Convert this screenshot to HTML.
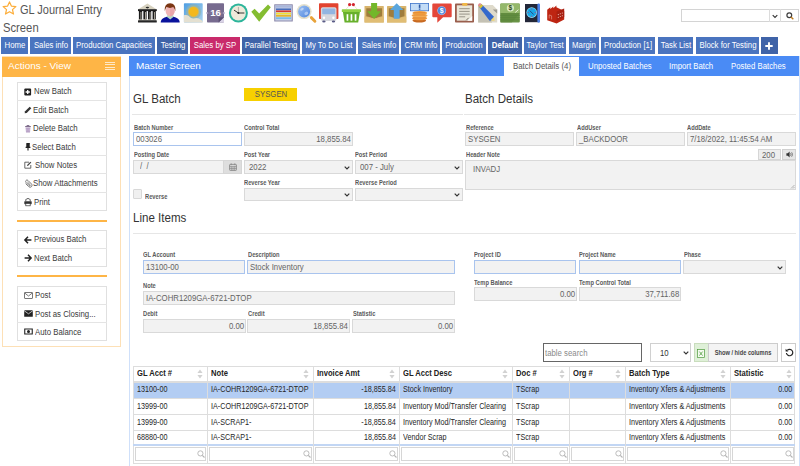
<!DOCTYPE html><html><head><meta charset="utf-8"><style>
html,body{margin:0;padding:0;background:#fff;width:800px;height:466px;overflow:hidden;position:relative}
body{font-family:"Liberation Sans",sans-serif}
.t{position:absolute;white-space:pre}
.b{position:absolute}
svg{position:absolute;overflow:visible}
</style></head><body>
<svg style="left:2px;top:1px" width="15" height="14" viewBox="0 0 24 23"><path d="M12 1.5l3.1 6.9 7.4.7-5.6 5 1.7 7.3L12 17.6l-6.6 3.8 1.7-7.3-5.6-5 7.4-.7z" fill="none" stroke="#fcae3c" stroke-width="2" stroke-linejoin="round"/></svg>
<div class="t" style="left:19.80px;top:4.09px;font-size:12.6px;line-height:12.6px;color:#555;font-weight:400;transform:scaleX(0.8730);transform-origin:0 50%;">GL Journal Entry</div>
<div class="t" style="left:2.50px;top:22.29px;font-size:12.6px;line-height:12.6px;color:#555;font-weight:400;transform:scaleX(0.8929);transform-origin:0 50%;">Screen</div>
<svg style="left:130px;top:0px" width="440" height="26" viewBox="130 0 440 26">
<defs>
<linearGradient id="wg" x1="0" y1="0" x2="1" y2="1"><stop offset="0" stop-color="#4f9ee2"/><stop offset="1" stop-color="#a9d3ee"/></linearGradient>
<linearGradient id="mg" x1="0" y1="0" x2="1" y2="1"><stop offset="0" stop-color="#9cc0f2"/><stop offset="1" stop-color="#4f86de"/></linearGradient>
</defs>
<!-- 1 bank -->
<path d="M147.4 3.6L138.3 9.3h18.2z" fill="#d6d1bf"/>
<ellipse cx="147.4" cy="7.6" rx="1.7" ry="0.8" fill="#2a2a2a"/>
<rect x="138" y="9.2" width="18.8" height="1.9" fill="#1c1c1c"/>
<g fill="#1c1c1c"><rect x="138.9" y="11" width="3.2" height="8.6"/><rect x="143.4" y="11" width="3.2" height="8.6"/><rect x="148" y="11" width="3.2" height="8.6"/><rect x="152.6" y="11" width="3.2" height="8.6"/></g>
<g fill="#d8d3c2"><rect x="140.6" y="12" width="0.7" height="7"/><rect x="145.1" y="12" width="0.7" height="7"/><rect x="149.7" y="12" width="0.7" height="7"/><rect x="154.3" y="12" width="0.7" height="7"/></g>
<rect x="138" y="19.6" width="18.8" height="0.8" fill="#d6d1bf"/>
<rect x="138" y="20.3" width="18.8" height="2.2" rx="0.6" fill="#262626"/>
<!-- 2 person -->
<path d="M160.7 22.6c0-3.6 3.6-6 9.5-6s9.5 2.4 9.5 6z" fill="#0a139c"/>
<path d="M166.4 16.6l3.8 2.8 3.8-2.8-1.2-1.6h-5.2z" fill="#b3dac6"/>
<ellipse cx="170.1" cy="11" rx="4.5" ry="5.4" fill="#f0b6b6"/>
<path d="M170.1 5.6a4.5 5.4 0 0 1 0 10.8z" fill="#e9a7aa"/>
<path d="M164.9 11.2C164.2 6 166.5 3.2 170.1 3.2s6 2.8 5.2 8c-.6-2.3-1.6-3.6-2.2-4.1-1.3 1-4.6 1.1-6.4 0-.6.5-1.3 1.8-1.8 4.1z" fill="#7b3613"/>
<!-- 3 weather -->
<rect x="183.9" y="3.2" width="18.8" height="19.3" rx="0.8" fill="url(#wg)"/>
<circle cx="193.5" cy="11.8" r="7.6" fill="#8fb3b0" opacity="0.75"/>
<circle cx="193.5" cy="11.8" r="5.6" fill="#c8b86a"/>
<circle cx="193.5" cy="11.8" r="4.7" fill="#f3b81d"/>
<path d="M183.9 15.2c1.8-.6 3.6-.3 5 .8 1.2 1.2 2.4 2.6 4.6 2.6 1.6-.6 3.6-1 5.2 0 1.6.8 2.8 1.8 4 2.6v1.3H183.9z" fill="#e4e0d1"/>
<!-- 4 calendar -->
<rect x="207" y="3.3" width="17" height="19.2" rx="0.8" fill="#776b8f"/>
<rect x="207" y="12.7" width="17" height="0.7" fill="#9186a8"/>
<circle cx="207" cy="13" r="0.9" fill="#b7aeca"/><circle cx="224" cy="13" r="0.9" fill="#b7aeca"/>
<text x="215.5" y="16.4" font-family="Liberation Sans" font-weight="700" font-size="9.6" fill="#fff" text-anchor="middle">16</text>
<path d="M218.6 22.5L224 17.3v5.2z" fill="#d9d3e6"/><path d="M218.6 22.5L224 17.3h-5.4z" fill="#5a5072"/>
<!-- 5 clock -->
<circle cx="238.4" cy="13" r="9.5" fill="#2db59b"/>
<circle cx="238.4" cy="13" r="7.5" fill="#efe9da"/>
<path d="M238.4 13V7" stroke="#777" stroke-width="0.5"/>
<path d="M238.4 13l-4.4-2.9M238.4 13h6" stroke="#222" stroke-width="0.9"/>
<circle cx="238.4" cy="13" r="1" fill="#222"/>
<!-- 6 check -->
<path d="M251.3 11.8l3.3-3.1 4.6 4.9 8.8-9.2 2.8 2.9-11.6 14.4z" fill="#84bd31"/>
<!-- 7 spreadsheet -->
<rect x="274.2" y="4.2" width="18.6" height="17.4" rx="0.5" fill="#8e8bac"/>
<rect x="275.3" y="5.3" width="16.4" height="15.2" fill="#cbd5ea"/>
<rect x="275.3" y="5.3" width="16.4" height="2.4" fill="#aab7da"/>
<rect x="276" y="8.5" width="15" height="1.4" fill="#3b63b6"/>
<rect x="276" y="10.4" width="15" height="1.7" fill="#d53a31"/>
<rect x="276" y="12.7" width="15" height="1.8" fill="#f4e02e"/>
<rect x="276" y="15" width="15" height="1.7" fill="#e6b52a"/>
<rect x="276" y="17.3" width="15" height="1.8" fill="#7bbde6"/>
<!-- 8 magnifier -->
<path d="M311.3 17.6l3.6 3.6" stroke="#e8a33a" stroke-width="2.9" stroke-linecap="round"/>
<circle cx="304.1" cy="11.6" r="7.5" fill="#e5e1cc"/>
<circle cx="304.1" cy="11.6" r="6" fill="url(#mg)"/>
<ellipse cx="302" cy="9.2" rx="1.9" ry="1.2" fill="#bcd3f5" transform="rotate(-30 302 9.2)"/>
<ellipse cx="306.3" cy="13.4" rx="2" ry="1.6" fill="#aac6f2" transform="rotate(-30 306.3 13.4)"/>
<!-- 9 truck -->
<rect x="319" y="3.2" width="19.4" height="15.8" rx="0.8" fill="#e2432f"/>
<rect x="320.9" y="7.2" width="15.6" height="13.8" rx="1.8" fill="#d6d7de"/>
<rect x="322.2" y="8.4" width="13" height="5.8" rx="0.8" fill="#93b5e1"/>
<circle cx="324" cy="17.8" r="1.2" fill="#fff"/><circle cx="333.4" cy="17.8" r="1.2" fill="#fff"/>
<ellipse cx="323.9" cy="21.4" rx="1.7" ry="1" fill="#5a5b86"/><ellipse cx="333.5" cy="21.4" rx="1.7" ry="1" fill="#5a5b86"/>
<!-- 10 basket -->
<path d="M345.6 9.6l4.2-4.6M357.6 9.6l-4.2-4.6" stroke="#e6dbbd" stroke-width="0.7"/>
<circle cx="349.6" cy="4.6" r="1.6" fill="#d4242e"/><circle cx="353.4" cy="4.6" r="1.6" fill="#d4242e"/>
<rect x="341.8" y="9.3" width="19.2" height="2.6" rx="0.5" fill="#8fd042"/>
<path d="M342.9 11.9h17l-1.7 10.5h-13.6z" fill="#67b02b"/>
<g fill="#fff"><rect x="346.6" y="14.2" width="1.7" height="6.5"/><rect x="350.6" y="14.2" width="1.7" height="6.5"/><rect x="354.7" y="14.2" width="1.7" height="6.5"/></g>
<!-- 11 download -->
<rect x="364.5" y="6" width="19.3" height="16.5" rx="0.6" fill="#d8b46c"/>
<path d="M366.3 8.2h15.7v8c-2.8.2-4.8 2.1-7.8 2.1s-5-1.9-7.9-2.1z" fill="#9f7d3d"/>
<path d="M364.5 16.4c3.2.2 6.2 2.4 9.6 2.4s6.4-2.2 9.7-2.4v6.1h-19.3z" fill="#e0bd74"/>
<path d="M371.1 3.1h6v8.2h3.9l-6.9 7.6-6.9-7.6h3.9z" fill="#73b72a"/>
<!-- 12 upload -->
<rect x="387" y="6" width="19.3" height="16.5" rx="0.6" fill="#d8b46c"/>
<path d="M388.8 8.2h15.7v8c-2.8.2-4.8 2.1-7.8 2.1s-5-1.9-7.9-2.1z" fill="#9f7d3d"/>
<path d="M387 16.4c3.2.2 6.2 2.4 9.6 2.4s6.4-2.2 9.7-2.4v6.1h-19.3z" fill="#e0bd74"/>
<path d="M396.7 3.3l6.7 6.8h-3.8v8.6h-5.8v-8.6h-3.8z" fill="#5ba6dd"/>
<!-- 13 coins -->
<rect x="410.4" y="3.4" width="18.2" height="7.4" fill="#c3dcf6" stroke="#3d73ca" stroke-width="0.8"/>
<rect x="418.8" y="4.5" width="1.6" height="3.4" fill="#2d5aa8"/><rect x="418.8" y="8.5" width="1.6" height="1.2" fill="#2d5aa8"/>
<ellipse cx="419.3" cy="20.6" rx="6.8" ry="1.9" fill="#c86a22"/>
<ellipse cx="419.6" cy="18.2" rx="7.6" ry="2.1" fill="#ee9a3e"/>
<ellipse cx="419.6" cy="15.6" rx="8" ry="2.2" fill="#f3ac52"/>
<ellipse cx="419.8" cy="13" rx="7.4" ry="2" fill="#f0a040"/>
<path d="M412.5 15.2h13M413 17.8h12.5M413.5 12.7h11.5" stroke="#d9782a" stroke-width="0.5"/>
<!-- 14 speech $ -->
<path d="M433.3 3.6h17.4a1 1 0 0 1 1 1v11.7a1 1 0 0 1-1 1h-7.6l-5.8 5.4v-5.4h-4a1 1 0 0 1-1-1V4.6a1 1 0 0 1 1-1z" fill="#e4473a"/>
<circle cx="441.7" cy="10.6" r="4.4" fill="#a9c5ef"/>
<circle cx="441.7" cy="10.6" r="3.8" fill="#4e86dc"/>
<text x="441.7" y="13.2" font-family="Liberation Sans" font-weight="700" font-size="7" fill="#fff" text-anchor="middle">$</text>
<!-- 15 clipboard -->
<rect x="455" y="3.4" width="19" height="19.1" rx="0.8" fill="#9a5e4d"/>
<rect x="456.8" y="5.3" width="15.4" height="15.4" fill="#e9e6d9"/>
<rect x="462.2" y="2.9" width="5.2" height="2.8" rx="0.6" fill="#f1b847"/>
<path d="M459.2 8.7h10.5M459.2 11.4h10.5M459.2 14.1h10.5M459.2 16.8h6" stroke="#8e8b7f" stroke-width="0.9"/>
<path d="M467.4 20.7l4.8-4.8v4.8z" fill="#fff"/><path d="M466.2 20.3l2.5-2.5" stroke="#77736a" stroke-width="1"/>
<!-- 16 pencil -->
<path d="M478.2 5h14.6l4.4 4.4v13.1h-19z" fill="#dedacb"/>
<path d="M478.2 5l14 17.5h-14z" fill="#c4c1b4"/>
<path d="M492.8 9.4l4.4 0 0 4.2z" fill="#9c9a92"/>
<path d="M478.8 6.6l2.6-2.6 12.6 12.8-1 3.2-3.2 1z" fill="#3468cc"/>
<path d="M478.8 6.6l2.6-2.6 1.8 1.8-2.6 2.6z" fill="#d7c13a"/>
<path d="M478.2 5.9c-.5-1.1.4-2.4 1.6-2.6.8-.1 1.4.2 1.6.7L479 6.6z" fill="#e28a8c"/>
<path d="M494 16.8l.6 4.3-4.2-.6z" fill="#eed57a"/>
<!-- 17 money -->
<rect x="500.3" y="3.5" width="19.5" height="19.1" rx="1" fill="#6a9446"/>
<path d="M500.3 4.5a1 1 0 0 1 1-1h17.5a1 1 0 0 1 1 1v8.6h-19.5z" fill="#94b86b"/>
<path d="M500.3 13.1h19.5l-8 9.5h-11.5z" fill="#5d873a" opacity="0.6"/>
<path d="M500.3 15.4h19.5M500.3 17.6h19.5M500.3 19.8h19.5" stroke="#55803a" stroke-width="0.5"/>
<circle cx="510.4" cy="8" r="3.6" fill="#dbeac0"/>
<text x="510.4" y="10.4" font-family="Liberation Sans" font-weight="700" font-size="6.6" fill="#2f4b20" text-anchor="middle">$</text>
<path d="M515.2 12.5l3.2-2.8" stroke="#e4eed2" stroke-width="1"/>
<!-- 18 device -->
<rect x="525" y="4" width="13.2" height="18.2" fill="#232738"/>
<rect x="537.4" y="3.4" width="2.6" height="19.4" rx="1.2" fill="#4d82e8"/>
<circle cx="531.7" cy="12.6" r="5.3" fill="#8fdcf8"/>
<circle cx="531.7" cy="12.6" r="4.6" fill="#1aa6e6"/>
<g fill="#d43a5a"><circle cx="531.7" cy="9" r="0.5"/><circle cx="528.2" cy="12.6" r="0.5"/><circle cx="535.2" cy="12.6" r="0.5"/><circle cx="531.7" cy="16.2" r="0.5"/></g>
<path d="M529.8 10.7l3.8 3.8" stroke="#24366e" stroke-width="0.8"/>
<!-- 19 factory -->
<path d="M547.2 9.8l3.1-2.6v1.9l3-2.7v1.9l3.1-2.8v1.8l7.8 3.6v8.6l-7.6 4.1-9.4-3.4z" fill="#be2512"/>
<path d="M556.6 11.6l7.6-3.2v8.6l-7.6 4.1z" fill="#a81f10"/>
<g fill="#f3d0ca"><circle cx="558.3" cy="14.6" r="0.55"/><circle cx="560.3" cy="13.8" r="0.55"/><circle cx="562.3" cy="13" r="0.55"/><circle cx="558.3" cy="17.3" r="0.55"/><circle cx="560.3" cy="16.5" r="0.55"/><circle cx="562.3" cy="15.7" r="0.55"/></g>
<path d="M549.2 18.5v-3.6l2.4.9v3.6" fill="none" stroke="#f0c0b8" stroke-width="0.5"/>
</svg>
<div class="b" style="left:680.50px;top:9.00px;width:118.00px;height:13.00px;background:#fff;border:1px solid #d4d4d4;box-sizing:border-box;"></div>
<div class="b" style="left:769.00px;top:9.00px;width:1.00px;height:13.00px;background:#dcdcdc;"></div>
<div class="b" style="left:780.00px;top:9.00px;width:1.00px;height:13.00px;background:#dcdcdc;"></div>
<svg style="left:771.5px;top:13.5px" width="6" height="5" viewBox="0 0 6 5"><path d="M0.7 1.2L3 3.5 5.3 1.2" fill="none" stroke="#333" stroke-width="1.1"/></svg>
<svg style="left:785.5px;top:11.5px" width="8" height="8" viewBox="0 0 8 8"><circle cx="3.3" cy="3.3" r="2.4" fill="none" stroke="#3d3d3d" stroke-width="1.2"/><path d="M5 5l2.3 2.3" stroke="#c07a1a" stroke-width="1.4"/></svg>
<div class="b" style="left:1.20px;top:37.00px;width:27.00px;height:17.00px;background:#4a74bf;"></div>
<div class="t" style="left:-185.30px;width:400px;text-align:center;top:40.84px;font-size:8.3px;line-height:8.3px;color:#fff;font-weight:400;transform:scaleX(0.9398);transform-origin:50% 50%;">Home</div>
<div class="b" style="left:30.00px;top:37.00px;width:41.00px;height:17.00px;background:#4a74bf;"></div>
<div class="t" style="left:-149.50px;width:400px;text-align:center;top:40.84px;font-size:8.3px;line-height:8.3px;color:#fff;font-weight:400;transform:scaleX(0.9398);transform-origin:50% 50%;">Sales info</div>
<div class="b" style="left:73.00px;top:37.00px;width:82.00px;height:17.00px;background:#4a74bf;"></div>
<div class="t" style="left:-86.00px;width:400px;text-align:center;top:40.84px;font-size:8.3px;line-height:8.3px;color:#fff;font-weight:400;transform:scaleX(0.9398);transform-origin:50% 50%;">Production Capacities</div>
<div class="b" style="left:157.00px;top:37.00px;width:31.00px;height:17.00px;background:#3f63a8;"></div>
<div class="t" style="left:-27.50px;width:400px;text-align:center;top:40.84px;font-size:8.3px;line-height:8.3px;color:#fff;font-weight:400;transform:scaleX(0.9398);transform-origin:50% 50%;">Testing</div>
<div class="b" style="left:190.00px;top:37.00px;width:49.50px;height:17.00px;background:#c92a6b;"></div>
<div class="t" style="left:14.75px;width:400px;text-align:center;top:40.84px;font-size:8.3px;line-height:8.3px;color:#fff;font-weight:400;transform:scaleX(0.9398);transform-origin:50% 50%;">Sales by SP</div>
<div class="b" style="left:241.50px;top:37.00px;width:58.50px;height:17.00px;background:#3f63a8;"></div>
<div class="t" style="left:70.75px;width:400px;text-align:center;top:40.84px;font-size:8.3px;line-height:8.3px;color:#fff;font-weight:400;transform:scaleX(0.9398);transform-origin:50% 50%;">Parallel Testing</div>
<div class="b" style="left:302.00px;top:37.00px;width:54.00px;height:17.00px;background:#4a74bf;"></div>
<div class="t" style="left:129.00px;width:400px;text-align:center;top:40.84px;font-size:8.3px;line-height:8.3px;color:#fff;font-weight:400;transform:scaleX(0.9398);transform-origin:50% 50%;">My To Do List</div>
<div class="b" style="left:358.00px;top:37.00px;width:41.00px;height:17.00px;background:#4a74bf;"></div>
<div class="t" style="left:178.50px;width:400px;text-align:center;top:40.84px;font-size:8.3px;line-height:8.3px;color:#fff;font-weight:400;transform:scaleX(0.9398);transform-origin:50% 50%;">Sales Info</div>
<div class="b" style="left:401.00px;top:37.00px;width:39.00px;height:17.00px;background:#4a74bf;"></div>
<div class="t" style="left:220.50px;width:400px;text-align:center;top:40.84px;font-size:8.3px;line-height:8.3px;color:#fff;font-weight:400;transform:scaleX(0.9398);transform-origin:50% 50%;">CRM Info</div>
<div class="b" style="left:442.00px;top:37.00px;width:44.00px;height:17.00px;background:#4a74bf;"></div>
<div class="t" style="left:264.00px;width:400px;text-align:center;top:40.84px;font-size:8.3px;line-height:8.3px;color:#fff;font-weight:400;transform:scaleX(0.9398);transform-origin:50% 50%;">Production</div>
<div class="b" style="left:488.00px;top:37.00px;width:33.50px;height:17.00px;background:#3f63a8;"></div>
<div class="t" style="left:304.75px;width:400px;text-align:center;top:40.84px;font-size:8.3px;line-height:8.3px;color:#fff;font-weight:700;transform:scaleX(0.9398);transform-origin:50% 50%;">Default</div>
<div class="b" style="left:523.50px;top:37.00px;width:42.50px;height:17.00px;background:#4a74bf;"></div>
<div class="t" style="left:344.75px;width:400px;text-align:center;top:40.84px;font-size:8.3px;line-height:8.3px;color:#fff;font-weight:400;transform:scaleX(0.9398);transform-origin:50% 50%;">Taylor Test</div>
<div class="b" style="left:568.60px;top:37.00px;width:30.40px;height:17.00px;background:#4a74bf;"></div>
<div class="t" style="left:383.80px;width:400px;text-align:center;top:40.84px;font-size:8.3px;line-height:8.3px;color:#fff;font-weight:400;transform:scaleX(0.9398);transform-origin:50% 50%;">Margin</div>
<div class="b" style="left:601.00px;top:37.00px;width:54.00px;height:17.00px;background:#4a74bf;"></div>
<div class="t" style="left:428.00px;width:400px;text-align:center;top:40.84px;font-size:8.3px;line-height:8.3px;color:#fff;font-weight:400;transform:scaleX(0.9398);transform-origin:50% 50%;">Production [1]</div>
<div class="b" style="left:657.60px;top:37.00px;width:35.80px;height:17.00px;background:#4a74bf;"></div>
<div class="t" style="left:475.50px;width:400px;text-align:center;top:40.84px;font-size:8.3px;line-height:8.3px;color:#fff;font-weight:400;transform:scaleX(0.9398);transform-origin:50% 50%;">Task List</div>
<div class="b" style="left:696.00px;top:37.00px;width:63.00px;height:17.00px;background:#4a74bf;"></div>
<div class="t" style="left:527.50px;width:400px;text-align:center;top:40.84px;font-size:8.3px;line-height:8.3px;color:#fff;font-weight:400;transform:scaleX(0.9398);transform-origin:50% 50%;">Block for Testing</div>
<div class="b" style="left:761.00px;top:37.00px;width:16.50px;height:17.00px;background:#3f63a8;"></div>
<svg style="left:765.2px;top:41.8px" width="8" height="8" viewBox="0 0 8 8"><path d="M4 0.3v7.4M0.3 4h7.4" stroke="#fff" stroke-width="1.9"/></svg>
<div class="b" style="left:2.30px;top:56.20px;width:118.70px;height:290.80px;background:#fff;border:1px solid #fde0b6;box-sizing:border-box;"></div>
<div class="b" style="left:2.30px;top:57.00px;width:118.70px;height:19.60px;background:#feb546;"></div>
<div class="t" style="left:8.30px;top:60.71px;font-size:9.4px;line-height:9.4px;color:#fff;font-weight:400;transform:scaleX(1.0638);transform-origin:0 50%;">Actions - View</div>
<div class="b" style="left:105.00px;top:62.00px;width:10.00px;height:0.90px;background:#ffe9c8;"></div>
<div class="b" style="left:105.00px;top:64.40px;width:10.00px;height:0.90px;background:#ffe9c8;"></div>
<div class="b" style="left:105.00px;top:67.00px;width:10.00px;height:0.90px;background:#ffe9c8;"></div>
<div class="b" style="left:105.00px;top:69.10px;width:10.00px;height:0.90px;background:#ffe9c8;"></div>
<div class="b" style="left:17.00px;top:82.00px;width:90.00px;height:128.70px;background:#fff;border:1px solid #e0e0e0;box-sizing:border-box;"></div>
<div class="t" style="left:33.90px;top:87.44px;font-size:8.3px;line-height:8.3px;color:#3a3a3a;font-weight:400;transform:scaleX(0.9398);transform-origin:0 50%;">New Batch</div>
<svg style="left:23.60px;top:87.80px" width="8" height="8" viewBox="0 0 8 8"><rect x="0.3" y="0.6" width="6.8" height="6.8" rx="1" fill="#222"/><path d="M3.7 1.9v4.2M1.6 4h4.2" stroke="#fff" stroke-width="1.3"/></svg>
<div class="b" style="left:17.00px;top:100.00px;width:90.00px;height:1.00px;background:#e4e4e4;"></div>
<div class="t" style="left:33.40px;top:105.80px;font-size:8.3px;line-height:8.3px;color:#3a3a3a;font-weight:400;transform:scaleX(0.9398);transform-origin:0 50%;">Edit Batch</div>
<svg style="left:23.60px;top:106.15px" width="8" height="8" viewBox="0 0 8 8"><path d="M0.6 7.3l0.5-2 4.6-4.6 1.6 1.6-4.6 4.6z" fill="#333"/></svg>
<div class="b" style="left:17.00px;top:118.00px;width:90.00px;height:1.00px;background:#e4e4e4;"></div>
<div class="t" style="left:32.70px;top:124.15px;font-size:8.3px;line-height:8.3px;color:#3a3a3a;font-weight:400;transform:scaleX(0.9398);transform-origin:0 50%;">Delete Batch</div>
<svg style="left:23.60px;top:124.50px" width="8" height="8" viewBox="0 0 8 8"><path d="M1.1 1.6h5.8M2.9 1.6V0.6h2.2v1" fill="none" stroke="#6e5a7c" stroke-width="0.9"/><path d="M1.6 2.4l0.4 5.2h4l0.4-5.2z" fill="#b39bc3"/><path d="M2.9 3.4v3.2M5.1 3.4v3.2" stroke="#e9e0ef" stroke-width="0.5"/></svg>
<div class="b" style="left:17.00px;top:137.00px;width:90.00px;height:1.00px;background:#e4e4e4;"></div>
<div class="t" style="left:31.70px;top:142.55px;font-size:8.3px;line-height:8.3px;color:#3a3a3a;font-weight:400;transform:scaleX(0.9398);transform-origin:0 50%;">Select Batch</div>
<svg style="left:23.60px;top:142.90px" width="8" height="8" viewBox="0 0 8 8"><path d="M2.4 0.6h3.4M3 0.9v3M5 0.9v3M1.6 4.4h4.8M4 4.4v3.2" stroke="#222" stroke-width="1.1"/><rect x="2.6" y="0.6" width="2.8" height="3.6" fill="#222"/></svg>
<div class="b" style="left:17.00px;top:155.00px;width:90.00px;height:1.00px;background:#e4e4e4;"></div>
<div class="t" style="left:34.60px;top:160.94px;font-size:8.3px;line-height:8.3px;color:#3a3a3a;font-weight:400;transform:scaleX(0.9398);transform-origin:0 50%;">Show Notes</div>
<svg style="left:23.60px;top:161.30px" width="8" height="8" viewBox="0 0 8 8"><path d="M5 1.2H0.8v6h6V4" fill="none" stroke="#444" stroke-width="0.8"/><path d="M3 5l0.3-1.2L6.4 0.7l0.9 0.9-3.1 3.1z" fill="#444"/></svg>
<div class="b" style="left:17.00px;top:173.00px;width:90.00px;height:1.00px;background:#e4e4e4;"></div>
<div class="t" style="left:32.70px;top:179.35px;font-size:8.3px;line-height:8.3px;color:#3a3a3a;font-weight:400;transform:scaleX(0.9398);transform-origin:0 50%;">Show Attachments</div>
<svg style="left:23.60px;top:179.70px" width="8" height="8" viewBox="0 0 8 8"><g transform="translate(8 0) scale(-1 1)"><path d="M6.3 3.6L3.4 6.5c-.9.9-2.2.9-2.9.1s-.7-1.9.1-2.7L4 0.5c.6-.6 1.5-.6 2 0s.5 1.3 0 1.9L2.8 5.6c-.3.3-.7.3-.9 0s-.3-.6 0-.9L4.6 2" fill="none" stroke="#666" stroke-width="0.9"/></g></svg>
<div class="b" style="left:17.00px;top:192.00px;width:90.00px;height:1.00px;background:#e4e4e4;"></div>
<div class="t" style="left:34.10px;top:197.75px;font-size:8.3px;line-height:8.3px;color:#3a3a3a;font-weight:400;transform:scaleX(0.9398);transform-origin:0 50%;">Print</div>
<svg style="left:23.60px;top:198.10px" width="8" height="8" viewBox="0 0 8 8"><path d="M1.8 3.2V2.2c0-1 1-1.6 2.2-1.6s2.2.6 2.2 1.6v1" fill="none" stroke="#333" stroke-width="0.9"/><rect x="0.3" y="3.2" width="7.4" height="3" rx="0.6" fill="#333"/><rect x="1.8" y="5.4" width="4.4" height="2.4" fill="#fff" stroke="#333" stroke-width="0.7"/></svg>
<div class="b" style="left:17.00px;top:219.50px;width:90.00px;height:2.00px;background:#feb546;"></div>
<div class="b" style="left:17.00px;top:229.60px;width:90.00px;height:37.10px;background:#fff;border:1px solid #e0e0e0;box-sizing:border-box;"></div>
<div class="t" style="left:33.80px;top:235.19px;font-size:8.3px;line-height:8.3px;color:#3a3a3a;font-weight:400;transform:scaleX(0.9398);transform-origin:0 50%;">Previous Batch</div>
<svg style="left:23.60px;top:235.55px" width="8" height="8" viewBox="0 0 8 8"><path d="M4 0.8L0.9 4 4 7.2M1.2 4h6.2" fill="none" stroke="#222" stroke-width="1.5"/></svg>
<div class="b" style="left:17.00px;top:248.00px;width:90.00px;height:1.00px;background:#e4e4e4;"></div>
<div class="t" style="left:33.80px;top:253.75px;font-size:8.3px;line-height:8.3px;color:#3a3a3a;font-weight:400;transform:scaleX(0.9398);transform-origin:0 50%;">Next Batch</div>
<svg style="left:23.60px;top:254.10px" width="8" height="8" viewBox="0 0 8 8"><path d="M4 0.8L7.1 4 4 7.2M6.8 4H0.6" fill="none" stroke="#222" stroke-width="1.5"/></svg>
<div class="b" style="left:17.00px;top:275.20px;width:90.00px;height:2.00px;background:#feb546;"></div>
<div class="b" style="left:17.00px;top:285.50px;width:90.00px;height:55.00px;background:#fff;border:1px solid #e0e0e0;box-sizing:border-box;"></div>
<div class="t" style="left:34.90px;top:291.19px;font-size:8.3px;line-height:8.3px;color:#3a3a3a;font-weight:400;transform:scaleX(0.9398);transform-origin:0 50%;">Post</div>
<svg style="left:23.60px;top:292.05px" width="9" height="7" viewBox="0 0 9 7"><rect x="0.5" y="0.5" width="8" height="6" rx="0.5" fill="none" stroke="#555" stroke-width="0.8"/><path d="M0.7 1L4.5 4 8.3 1" fill="none" stroke="#555" stroke-width="0.8"/></svg>
<div class="b" style="left:17.00px;top:304.00px;width:90.00px;height:1.00px;background:#e4e4e4;"></div>
<div class="t" style="left:34.50px;top:309.54px;font-size:8.3px;line-height:8.3px;color:#3a3a3a;font-weight:400;transform:scaleX(0.9398);transform-origin:0 50%;">Post as Closing...</div>
<svg style="left:23.60px;top:310.40px" width="9" height="7" viewBox="0 0 9 7"><rect x="0.2" y="0.3" width="8.6" height="6.4" rx="0.5" fill="#222"/><path d="M0.3 0.8L4.5 3.8 8.7 0.8" fill="none" stroke="#fff" stroke-width="0.7"/></svg>
<div class="b" style="left:17.00px;top:322.00px;width:90.00px;height:1.00px;background:#e4e4e4;"></div>
<div class="t" style="left:35.20px;top:327.60px;font-size:8.3px;line-height:8.3px;color:#3a3a3a;font-weight:400;transform:scaleX(0.9398);transform-origin:0 50%;">Auto Balance</div>
<svg style="left:23.60px;top:328.45px" width="9" height="7" viewBox="0 0 9 7"><rect x="0.2" y="0.5" width="8.6" height="6" fill="#222"/><rect x="1.3" y="1.5" width="6.4" height="4" fill="#fff"/><circle cx="4.5" cy="3.5" r="1.5" fill="#222"/></svg>
<div class="b" style="left:129.00px;top:56.20px;width:671.00px;height:413.80px;background:#fff;border:1px solid #cfe0fa;box-sizing:border-box;"></div>
<div class="b" style="left:129.00px;top:56.20px;width:670.00px;height:20.20px;background:#4a8bf5;"></div>
<div class="t" style="left:135.80px;top:61.41px;font-size:9.4px;line-height:9.4px;color:#fff;font-weight:400;transform:scaleX(1.0638);transform-origin:0 50%;">Master Screen</div>
<div class="b" style="left:504.40px;top:56.80px;width:74.30px;height:19.40px;background:#fff;"></div>
<div class="t" style="left:512.70px;top:62.15px;font-size:8.3px;line-height:8.3px;color:#555;font-weight:400;transform:scaleX(0.9458);transform-origin:0 50%;">Batch Details (4)</div>
<div class="t" style="left:587.70px;top:62.15px;font-size:8.3px;line-height:8.3px;color:#fff;font-weight:400;transform:scaleX(0.9398);transform-origin:0 50%;">Unposted Batches</div>
<div class="t" style="left:668.60px;top:62.15px;font-size:8.3px;line-height:8.3px;color:#fff;font-weight:400;transform:scaleX(0.9398);transform-origin:0 50%;">Import Batch</div>
<div class="t" style="left:730.70px;top:62.15px;font-size:8.3px;line-height:8.3px;color:#fff;font-weight:400;transform:scaleX(0.9398);transform-origin:0 50%;">Posted Batches</div>
<div class="t" style="left:132.70px;top:92.84px;font-size:12.3px;line-height:12.3px;color:#333;font-weight:400;transform:scaleX(0.9390);transform-origin:0 50%;">GL Batch</div>
<div class="b" style="left:244.30px;top:87.90px;width:52.50px;height:12.80px;background:#f7d000;"></div>
<div class="t" style="left:70.60px;width:400px;text-align:center;top:90.24px;font-size:8.3px;line-height:8.3px;color:#555;font-weight:400;transform:scaleX(0.9337);transform-origin:50% 50%;">SYSGEN</div>
<div class="t" style="left:465.10px;top:92.75px;font-size:12.3px;line-height:12.3px;color:#333;font-weight:400;transform:scaleX(0.9390);transform-origin:0 50%;">Batch Details</div>
<div class="b" style="left:132.00px;top:114.00px;width:331.00px;height:1.00px;background:#e6e6e6;"></div>
<div class="b" style="left:464.00px;top:114.00px;width:332.00px;height:1.00px;background:#e6e6e6;"></div>
<div class="t" style="left:133.70px;top:124.96px;font-size:6.4px;line-height:6.4px;color:#5a5a5a;font-weight:700;transform:scaleX(0.8984);transform-origin:0 50%;">Batch Number</div>
<div class="t" style="left:244.30px;top:124.96px;font-size:6.4px;line-height:6.4px;color:#5a5a5a;font-weight:700;transform:scaleX(0.8984);transform-origin:0 50%;">Control Total</div>
<div class="t" style="left:465.60px;top:124.96px;font-size:6.4px;line-height:6.4px;color:#5a5a5a;font-weight:700;transform:scaleX(0.8984);transform-origin:0 50%;">Reference</div>
<div class="t" style="left:576.50px;top:124.96px;font-size:6.4px;line-height:6.4px;color:#5a5a5a;font-weight:700;transform:scaleX(0.8984);transform-origin:0 50%;">AddUser</div>
<div class="t" style="left:687.00px;top:124.96px;font-size:6.4px;line-height:6.4px;color:#5a5a5a;font-weight:700;transform:scaleX(0.8984);transform-origin:0 50%;">AddDate</div>
<div class="b" style="left:133.00px;top:132.00px;width:109.00px;height:14.00px;background:#fff;border:1px solid #a9c4ee;box-sizing:border-box;"></div>
<div class="t" style="left:135.50px;top:134.54px;font-size:8.3px;line-height:8.3px;color:#646464;font-weight:400;transform:scaleX(0.9398);transform-origin:0 50%;">003026</div>
<div class="b" style="left:244.00px;top:132.00px;width:109.00px;height:14.00px;background:#f2f2f2;border:1px solid #d9d9d9;box-sizing:border-box;"></div>
<div class="t" style="right:449.00px;top:134.54px;font-size:8.3px;line-height:8.3px;color:#646464;font-weight:400;text-align:right;transform:scaleX(0.9398);transform-origin:100% 50%;">18,855.84</div>
<div class="b" style="left:465.00px;top:132.00px;width:109.00px;height:14.00px;background:#f2f2f2;border:1px solid #d9d9d9;box-sizing:border-box;"></div>
<div class="t" style="left:467.50px;top:134.54px;font-size:8.3px;line-height:8.3px;color:#646464;font-weight:400;transform:scaleX(0.9398);transform-origin:0 50%;">SYSGEN</div>
<div class="b" style="left:576.00px;top:132.00px;width:109.00px;height:14.00px;background:#f2f2f2;border:1px solid #d9d9d9;box-sizing:border-box;"></div>
<div class="t" style="left:578.50px;top:134.54px;font-size:8.3px;line-height:8.3px;color:#646464;font-weight:400;transform:scaleX(0.9398);transform-origin:0 50%;">_BACKDOOR</div>
<div class="b" style="left:687.00px;top:132.00px;width:109.00px;height:14.00px;background:#f2f2f2;border:1px solid #d9d9d9;box-sizing:border-box;"></div>
<div class="t" style="left:689.50px;top:134.54px;font-size:8.3px;line-height:8.3px;color:#646464;font-weight:400;transform:scaleX(0.9398);transform-origin:0 50%;">7/18/2022, 11:45:54 AM</div>
<div class="t" style="left:133.70px;top:152.06px;font-size:6.4px;line-height:6.4px;color:#5a5a5a;font-weight:700;transform:scaleX(0.8984);transform-origin:0 50%;">Posting Date</div>
<div class="t" style="left:244.30px;top:152.06px;font-size:6.4px;line-height:6.4px;color:#5a5a5a;font-weight:700;transform:scaleX(0.8984);transform-origin:0 50%;">Post Year</div>
<div class="t" style="left:355.00px;top:152.06px;font-size:6.4px;line-height:6.4px;color:#5a5a5a;font-weight:700;transform:scaleX(0.8984);transform-origin:0 50%;">Post Period</div>
<div class="t" style="left:465.60px;top:152.06px;font-size:6.4px;line-height:6.4px;color:#5a5a5a;font-weight:700;transform:scaleX(0.8984);transform-origin:0 50%;">Header Note</div>
<div class="b" style="left:133.00px;top:160.00px;width:109.00px;height:14.00px;background:#f2f2f2;border:1px solid #d9d9d9;box-sizing:border-box;"></div>
<div class="t" style="left:140.00px;top:162.25px;font-size:8.3px;line-height:8.3px;color:#646464;font-weight:400;transform:scaleX(0.9398);transform-origin:0 50%;">/  /</div>
<div class="b" style="left:223.00px;top:160.00px;width:19.00px;height:14.00px;background:#dedede;border:1px solid #d6d6d6;box-sizing:border-box;"></div>
<svg style="left:228.5px;top:162.5px" width="8" height="8" viewBox="0 0 8 8"><rect x="0.6" y="1.4" width="6.8" height="6" rx="0.6" fill="none" stroke="#808080" stroke-width="0.8"/><path d="M0.6 3.4h6.8M2.3 3.4v4M4 3.4v4M5.7 3.4v4M0.6 5.4h6.8M2.2 0.2v2M5.8 0.2v2" stroke="#808080" stroke-width="0.6"/></svg>
<div class="b" style="left:244.00px;top:160.00px;width:109.00px;height:14.00px;background:#f2f2f2;border:1px solid #d9d9d9;box-sizing:border-box;"></div>
<div class="t" style="left:248.90px;top:162.54px;font-size:8.3px;line-height:8.3px;color:#646464;font-weight:400;transform:scaleX(0.9398);transform-origin:0 50%;">2022</div>
<svg style="left:343.50px;top:165.50px" width="6" height="4" viewBox="0 0 6 4"><path d="M0.7 0.7L3 3 5.3 0.7" fill="none" stroke="#333" stroke-width="1.2"/></svg>
<div class="b" style="left:355.00px;top:160.00px;width:108.00px;height:14.00px;background:#f2f2f2;border:1px solid #d9d9d9;box-sizing:border-box;"></div>
<div class="t" style="left:359.90px;top:162.54px;font-size:8.3px;line-height:8.3px;color:#646464;font-weight:400;transform:scaleX(0.9398);transform-origin:0 50%;">007 - July</div>
<svg style="left:453.50px;top:165.50px" width="6" height="4" viewBox="0 0 6 4"><path d="M0.7 0.7L3 3 5.3 0.7" fill="none" stroke="#333" stroke-width="1.2"/></svg>
<div class="b" style="left:758.00px;top:149.00px;width:23.00px;height:11.00px;background:#eeeeee;border:1px solid #d6d6d6;box-sizing:border-box;"></div>
<div class="t" style="left:761.60px;top:150.54px;font-size:8.3px;line-height:8.3px;color:#646464;font-weight:400;transform:scaleX(0.9398);transform-origin:0 50%;">200</div>
<div class="b" style="left:782.00px;top:149.00px;width:14.00px;height:11.00px;background:#e6e6e6;border:1px solid #d0d0d0;box-sizing:border-box;"></div>
<svg style="left:785.5px;top:151px" width="7" height="7" viewBox="0 0 7 7"><path d="M0.4 2.3h1.4L3.6 0.6v5.8L1.8 4.7H0.4z" fill="#333"/><path d="M4.6 2.2c.5.6.5 2 0 2.6M5.6 1.3c1 1 1 3.4 0 4.4" fill="none" stroke="#333" stroke-width="0.6"/></svg>
<div class="b" style="left:465.00px;top:160.00px;width:331.00px;height:30.00px;background:#f2f2f2;border:1px solid #d9d9d9;box-sizing:border-box;"></div>
<div class="t" style="left:472.50px;top:165.04px;font-size:8.3px;line-height:8.3px;color:#666;font-weight:400;transform:scaleX(0.9398);transform-origin:0 50%;">INVADJ</div>
<svg style="left:790px;top:184px" width="5" height="5" viewBox="0 0 5 5"><path d="M4.5 1L1 4.5M4.5 3L3 4.5" stroke="#888" stroke-width="0.6"/></svg>
<div class="t" style="left:244.30px;top:179.76px;font-size:6.4px;line-height:6.4px;color:#5a5a5a;font-weight:700;transform:scaleX(0.8984);transform-origin:0 50%;">Reverse Year</div>
<div class="t" style="left:355.00px;top:179.76px;font-size:6.4px;line-height:6.4px;color:#5a5a5a;font-weight:700;transform:scaleX(0.8984);transform-origin:0 50%;">Reverse Period</div>
<div class="b" style="left:244.00px;top:188.00px;width:109.00px;height:13.00px;background:#f2f2f2;border:1px solid #d9d9d9;box-sizing:border-box;"></div>
<svg style="left:343.50px;top:193.00px" width="6" height="4" viewBox="0 0 6 4"><path d="M0.7 0.7L3 3 5.3 0.7" fill="none" stroke="#333" stroke-width="1.2"/></svg>
<div class="b" style="left:355.00px;top:188.00px;width:108.00px;height:13.00px;background:#f2f2f2;border:1px solid #d9d9d9;box-sizing:border-box;"></div>
<svg style="left:453.50px;top:193.00px" width="6" height="4" viewBox="0 0 6 4"><path d="M0.7 0.7L3 3 5.3 0.7" fill="none" stroke="#333" stroke-width="1.2"/></svg>
<div class="b" style="left:133.30px;top:189.20px;width:9.10px;height:9.80px;background:#f0f0f0;border:1px solid #d8d8d8;box-sizing:border-box;border-radius:1px;"></div>
<div class="t" style="left:144.80px;top:193.76px;font-size:6.4px;line-height:6.4px;color:#5a5a5a;font-weight:700;transform:scaleX(0.8984);transform-origin:0 50%;">Reverse</div>
<div class="t" style="left:133.00px;top:212.04px;font-size:12.3px;line-height:12.3px;color:#333;font-weight:400;transform:scaleX(0.9390);transform-origin:0 50%;">Line Items</div>
<div class="b" style="left:133.00px;top:233.30px;width:663.00px;height:1.00px;background:#e6e6e6;"></div>
<div class="t" style="left:143.30px;top:252.06px;font-size:6.4px;line-height:6.4px;color:#5a5a5a;font-weight:700;transform:scaleX(0.8984);transform-origin:0 50%;">GL Account</div>
<div class="t" style="left:247.70px;top:252.06px;font-size:6.4px;line-height:6.4px;color:#5a5a5a;font-weight:700;transform:scaleX(0.8984);transform-origin:0 50%;">Description</div>
<div class="t" style="left:473.90px;top:252.06px;font-size:6.4px;line-height:6.4px;color:#5a5a5a;font-weight:700;transform:scaleX(0.8984);transform-origin:0 50%;">Project ID</div>
<div class="t" style="left:579.20px;top:252.06px;font-size:6.4px;line-height:6.4px;color:#5a5a5a;font-weight:700;transform:scaleX(0.8984);transform-origin:0 50%;">Project Name</div>
<div class="t" style="left:683.60px;top:252.06px;font-size:6.4px;line-height:6.4px;color:#5a5a5a;font-weight:700;transform:scaleX(0.8984);transform-origin:0 50%;">Phase</div>
<div class="b" style="left:143.00px;top:260.00px;width:102.00px;height:14.00px;background:#f2f2f2;border:1px solid #a9c4ee;box-sizing:border-box;"></div>
<div class="t" style="left:145.50px;top:262.55px;font-size:8.3px;line-height:8.3px;color:#646464;font-weight:400;transform:scaleX(0.9398);transform-origin:0 50%;">13100-00</div>
<div class="b" style="left:247.00px;top:260.00px;width:208.00px;height:14.00px;background:#f2f2f2;border:1px solid #a9c4ee;box-sizing:border-box;"></div>
<div class="t" style="left:249.50px;top:262.55px;font-size:8.3px;line-height:8.3px;color:#646464;font-weight:400;transform:scaleX(0.9398);transform-origin:0 50%;">Stock Inventory</div>
<div class="b" style="left:474.00px;top:260.00px;width:102.00px;height:14.00px;background:#f2f2f2;border:1px solid #a9c4ee;box-sizing:border-box;"></div>
<div class="b" style="left:579.00px;top:260.00px;width:102.00px;height:14.00px;background:#f2f2f2;border:1px solid #a9c4ee;box-sizing:border-box;"></div>
<div class="b" style="left:683.00px;top:260.00px;width:103.00px;height:14.00px;background:#f2f2f2;border:1px solid #d9d9d9;box-sizing:border-box;"></div>
<svg style="left:776.50px;top:265.50px" width="6" height="4" viewBox="0 0 6 4"><path d="M0.7 0.7L3 3 5.3 0.7" fill="none" stroke="#333" stroke-width="1.2"/></svg>
<div class="t" style="left:143.30px;top:283.36px;font-size:6.4px;line-height:6.4px;color:#5a5a5a;font-weight:700;transform:scaleX(0.8984);transform-origin:0 50%;">Note</div>
<div class="t" style="left:473.90px;top:280.36px;font-size:6.4px;line-height:6.4px;color:#5a5a5a;font-weight:700;transform:scaleX(0.8984);transform-origin:0 50%;">Temp Balance</div>
<div class="t" style="left:579.20px;top:280.36px;font-size:6.4px;line-height:6.4px;color:#5a5a5a;font-weight:700;transform:scaleX(0.8984);transform-origin:0 50%;">Temp Control Total</div>
<div class="b" style="left:143.00px;top:291.00px;width:312.00px;height:14.00px;background:#f2f2f2;border:1px solid #d9d9d9;box-sizing:border-box;"></div>
<div class="t" style="left:145.50px;top:293.55px;font-size:8.3px;line-height:8.3px;color:#646464;font-weight:400;transform:scaleX(0.9398);transform-origin:0 50%;">IA-COHR1209GA-6721-DTOP</div>
<div class="b" style="left:474.00px;top:287.00px;width:103.00px;height:14.00px;background:#f2f2f2;border:1px solid #d9d9d9;box-sizing:border-box;"></div>
<div class="t" style="right:225.00px;top:289.55px;font-size:8.3px;line-height:8.3px;color:#646464;font-weight:400;text-align:right;transform:scaleX(0.9398);transform-origin:100% 50%;">0.00</div>
<div class="b" style="left:579.00px;top:287.00px;width:102.00px;height:14.00px;background:#f2f2f2;border:1px solid #d9d9d9;box-sizing:border-box;"></div>
<div class="t" style="right:121.00px;top:289.55px;font-size:8.3px;line-height:8.3px;color:#646464;font-weight:400;text-align:right;transform:scaleX(0.9398);transform-origin:100% 50%;">37,711.68</div>
<div class="t" style="left:143.30px;top:310.96px;font-size:6.4px;line-height:6.4px;color:#5a5a5a;font-weight:700;transform:scaleX(0.8984);transform-origin:0 50%;">Debit</div>
<div class="t" style="left:247.70px;top:310.96px;font-size:6.4px;line-height:6.4px;color:#5a5a5a;font-weight:700;transform:scaleX(0.8984);transform-origin:0 50%;">Credit</div>
<div class="t" style="left:352.70px;top:310.96px;font-size:6.4px;line-height:6.4px;color:#5a5a5a;font-weight:700;transform:scaleX(0.8984);transform-origin:0 50%;">Statistic</div>
<div class="b" style="left:143.00px;top:319.00px;width:103.00px;height:14.00px;background:#f2f2f2;border:1px solid #d9d9d9;box-sizing:border-box;"></div>
<div class="t" style="right:556.00px;top:321.55px;font-size:8.3px;line-height:8.3px;color:#646464;font-weight:400;text-align:right;transform:scaleX(0.9398);transform-origin:100% 50%;">0.00</div>
<div class="b" style="left:247.00px;top:319.00px;width:103.00px;height:14.00px;background:#f2f2f2;border:1px solid #d9d9d9;box-sizing:border-box;"></div>
<div class="t" style="right:452.00px;top:321.55px;font-size:8.3px;line-height:8.3px;color:#646464;font-weight:400;text-align:right;transform:scaleX(0.9398);transform-origin:100% 50%;">18,855.84</div>
<div class="b" style="left:352.00px;top:319.00px;width:103.00px;height:14.00px;background:#f2f2f2;border:1px solid #d9d9d9;box-sizing:border-box;"></div>
<div class="t" style="right:347.00px;top:321.55px;font-size:8.3px;line-height:8.3px;color:#646464;font-weight:400;text-align:right;transform:scaleX(0.9398);transform-origin:100% 50%;">0.00</div>
<div class="b" style="left:542.60px;top:343.40px;width:99.00px;height:18.60px;background:#fff;border:1px solid #666;box-sizing:border-box;border-width:1.5px;"></div>
<div class="t" style="left:545.00px;top:349.14px;font-size:8.3px;line-height:8.3px;color:#8a8a8a;font-weight:400;transform:scaleX(0.9398);transform-origin:0 50%;">table search</div>
<div class="b" style="left:650.00px;top:343.40px;width:41.40px;height:18.60px;background:#fff;border:1px solid #d0d0d0;box-sizing:border-box;"></div>
<div class="t" style="left:660.30px;top:349.14px;font-size:8.3px;line-height:8.3px;color:#333;font-weight:400;transform:scaleX(0.9398);transform-origin:0 50%;">10</div>
<svg style="left:683.00px;top:350.60px" width="6" height="4" viewBox="0 0 6 4"><path d="M0.7 0.7L3 3 5.3 0.7" fill="none" stroke="#333" stroke-width="1.2"/></svg>
<div class="b" style="left:693.50px;top:343.40px;width:15.00px;height:18.60px;background:#dff0d8;border:1px solid #c9ddbd;box-sizing:border-box;"></div>
<svg style="left:697px;top:348.5px" width="8" height="9" viewBox="0 0 8 9"><rect x="0.5" y="0.5" width="7" height="8" fill="#f5fbf0" stroke="#4c9a3b" stroke-width="0.7"/><path d="M2.4 2.6l3.2 4M5.6 2.6l-3.2 4" stroke="#4c9a3b" stroke-width="0.8"/></svg>
<div class="b" style="left:708.20px;top:343.40px;width:69.60px;height:18.60px;background:#f4f4f4;border:1px solid #cccccc;box-sizing:border-box;"></div>
<div class="t" style="left:543.00px;width:400px;text-align:center;top:349.86px;font-size:6.4px;line-height:6.4px;color:#444;font-weight:700;transform:scaleX(0.8906);transform-origin:50% 50%;">Show / hide columns</div>
<div class="b" style="left:781.00px;top:343.40px;width:15.20px;height:18.60px;background:#fff;border:1px solid #cccccc;box-sizing:border-box;"></div>
<svg style="left:784.5px;top:348px" width="9" height="9" viewBox="0 0 9 9"><path d="M2.2 2.4A3.2 3.2 0 1 1 1.4 5" fill="none" stroke="#222" stroke-width="1.2"/><path d="M0.6 0.8v2.8h2.8z" fill="#222"/></svg>
<div class="b" style="left:133.00px;top:365.50px;width:662.40px;height:98.30px;background:#fff;border:1px solid #dddddd;box-sizing:border-box;"></div>
<div class="b" style="left:134.00px;top:381.30px;width:660.40px;height:16.70px;background:#b3cdf3;"></div>
<div class="b" style="left:133.00px;top:380.80px;width:662.40px;height:2.00px;background:#dddddd;"></div>
<div class="b" style="left:133.00px;top:380.80px;width:662.40px;height:1.00px;background:#dddddd;"></div>
<div class="b" style="left:133.00px;top:397.50px;width:662.40px;height:1.00px;background:#dddddd;"></div>
<div class="b" style="left:133.00px;top:413.50px;width:662.40px;height:1.00px;background:#dddddd;"></div>
<div class="b" style="left:133.00px;top:429.50px;width:662.40px;height:1.00px;background:#dddddd;"></div>
<div class="b" style="left:133.00px;top:444.70px;width:662.40px;height:1.00px;background:#dddddd;"></div>
<div class="b" style="left:133.00px;top:444.20px;width:662.40px;height:2.00px;background:#c2d6f4;"></div>
<div class="b" style="left:206.50px;top:365.50px;width:1.00px;height:98.30px;background:#dddddd;"></div>
<div class="b" style="left:312.50px;top:365.50px;width:1.00px;height:98.30px;background:#dddddd;"></div>
<div class="b" style="left:398.50px;top:365.50px;width:1.00px;height:98.30px;background:#dddddd;"></div>
<div class="b" style="left:511.50px;top:365.50px;width:1.00px;height:98.30px;background:#dddddd;"></div>
<div class="b" style="left:568.50px;top:365.50px;width:1.00px;height:98.30px;background:#dddddd;"></div>
<div class="b" style="left:624.50px;top:365.50px;width:1.00px;height:98.30px;background:#dddddd;"></div>
<div class="b" style="left:729.50px;top:365.50px;width:1.00px;height:98.30px;background:#dddddd;"></div>
<div class="t" style="left:137.20px;top:369.05px;font-size:8.3px;line-height:8.3px;color:#222;font-weight:700;transform:scaleX(0.9157);transform-origin:0 50%;">GL Acct #</div>
<svg style="left:197.40px;top:368.8px" width="6" height="10" viewBox="0 0 6 10"><path d="M3 0.4L5.6 4.1H0.4zM3 9.6L5.6 5.9H0.4z" fill="#d2d2d2"/></svg>
<div class="t" style="left:211.20px;top:369.05px;font-size:8.3px;line-height:8.3px;color:#222;font-weight:700;transform:scaleX(0.9157);transform-origin:0 50%;">Note</div>
<svg style="left:303.40px;top:368.8px" width="6" height="10" viewBox="0 0 6 10"><path d="M3 0.4L5.6 4.1H0.4zM3 9.6L5.6 5.9H0.4z" fill="#d2d2d2"/></svg>
<div class="t" style="left:317.20px;top:369.05px;font-size:8.3px;line-height:8.3px;color:#222;font-weight:700;transform:scaleX(0.9157);transform-origin:0 50%;">Invoice Amt</div>
<svg style="left:389.40px;top:368.8px" width="6" height="10" viewBox="0 0 6 10"><path d="M3 0.4L5.6 4.1H0.4zM3 9.6L5.6 5.9H0.4z" fill="#d2d2d2"/></svg>
<div class="t" style="left:403.20px;top:369.05px;font-size:8.3px;line-height:8.3px;color:#222;font-weight:700;transform:scaleX(0.9157);transform-origin:0 50%;">GL Acct Desc</div>
<svg style="left:502.40px;top:368.8px" width="6" height="10" viewBox="0 0 6 10"><path d="M3 0.4L5.6 4.1H0.4zM3 9.6L5.6 5.9H0.4z" fill="#d2d2d2"/></svg>
<div class="t" style="left:516.20px;top:369.05px;font-size:8.3px;line-height:8.3px;color:#222;font-weight:700;transform:scaleX(0.9157);transform-origin:0 50%;">Doc #</div>
<svg style="left:559.40px;top:368.8px" width="6" height="10" viewBox="0 0 6 10"><path d="M3 0.4L5.6 4.1H0.4zM3 9.6L5.6 5.9H0.4z" fill="#d2d2d2"/></svg>
<div class="t" style="left:573.20px;top:369.05px;font-size:8.3px;line-height:8.3px;color:#222;font-weight:700;transform:scaleX(0.9157);transform-origin:0 50%;">Org #</div>
<svg style="left:615.40px;top:368.8px" width="6" height="10" viewBox="0 0 6 10"><path d="M3 0.4L5.6 4.1H0.4zM3 9.6L5.6 5.9H0.4z" fill="#d2d2d2"/></svg>
<div class="t" style="left:629.20px;top:369.05px;font-size:8.3px;line-height:8.3px;color:#222;font-weight:700;transform:scaleX(0.9157);transform-origin:0 50%;">Batch Type</div>
<svg style="left:720.40px;top:368.8px" width="6" height="10" viewBox="0 0 6 10"><path d="M3 0.4L5.6 4.1H0.4zM3 9.6L5.6 5.9H0.4z" fill="#d2d2d2"/></svg>
<div class="t" style="left:734.20px;top:369.05px;font-size:8.3px;line-height:8.3px;color:#222;font-weight:700;transform:scaleX(0.9157);transform-origin:0 50%;">Statistic</div>
<svg style="left:785.80px;top:368.8px" width="6" height="10" viewBox="0 0 6 10"><path d="M3 0.4L5.6 4.1H0.4zM3 9.6L5.6 5.9H0.4z" fill="#d2d2d2"/></svg>
<div class="t" style="left:137.20px;top:385.29px;font-size:8.3px;line-height:8.3px;color:#262626;font-weight:400;transform:scaleX(0.8675);transform-origin:0 50%;">13100-00</div>
<div class="t" style="left:211.20px;top:385.29px;font-size:8.3px;line-height:8.3px;color:#262626;font-weight:400;transform:scaleX(0.8675);transform-origin:0 50%;">IA-COHR1209GA-6721-DTOP</div>
<div class="t" style="right:404.50px;top:385.29px;font-size:8.3px;line-height:8.3px;color:#262626;font-weight:400;text-align:right;transform:scaleX(0.8675);transform-origin:100% 50%;">-18,855.84</div>
<div class="t" style="left:403.20px;top:385.29px;font-size:8.3px;line-height:8.3px;color:#262626;font-weight:400;transform:scaleX(0.8675);transform-origin:0 50%;">Stock Inventory</div>
<div class="t" style="left:516.20px;top:385.29px;font-size:8.3px;line-height:8.3px;color:#262626;font-weight:400;transform:scaleX(0.8675);transform-origin:0 50%;">TScrap</div>
<div class="t" style="left:629.20px;top:385.29px;font-size:8.3px;line-height:8.3px;color:#262626;font-weight:400;transform:scaleX(0.8675);transform-origin:0 50%;">Inventory Xfers &amp; Adjustments</div>
<div class="t" style="right:8.10px;top:385.29px;font-size:8.3px;line-height:8.3px;color:#262626;font-weight:400;text-align:right;transform:scaleX(0.8675);transform-origin:100% 50%;">0.00</div>
<div class="t" style="left:137.20px;top:401.64px;font-size:8.3px;line-height:8.3px;color:#262626;font-weight:400;transform:scaleX(0.8675);transform-origin:0 50%;">13999-00</div>
<div class="t" style="left:211.20px;top:401.64px;font-size:8.3px;line-height:8.3px;color:#262626;font-weight:400;transform:scaleX(0.8675);transform-origin:0 50%;">IA-COHR1209GA-6721-DTOP</div>
<div class="t" style="right:404.50px;top:401.64px;font-size:8.3px;line-height:8.3px;color:#262626;font-weight:400;text-align:right;transform:scaleX(0.8675);transform-origin:100% 50%;">18,855.84</div>
<div class="t" style="left:403.20px;top:401.64px;font-size:8.3px;line-height:8.3px;color:#262626;font-weight:400;transform:scaleX(0.8675);transform-origin:0 50%;">Inventory Mod/Transfer Clearing</div>
<div class="t" style="left:516.20px;top:401.64px;font-size:8.3px;line-height:8.3px;color:#262626;font-weight:400;transform:scaleX(0.8675);transform-origin:0 50%;">TScrap</div>
<div class="t" style="left:629.20px;top:401.64px;font-size:8.3px;line-height:8.3px;color:#262626;font-weight:400;transform:scaleX(0.8675);transform-origin:0 50%;">Inventory Xfers &amp; Adjustments</div>
<div class="t" style="right:8.10px;top:401.64px;font-size:8.3px;line-height:8.3px;color:#262626;font-weight:400;text-align:right;transform:scaleX(0.8675);transform-origin:100% 50%;">0.00</div>
<div class="t" style="left:137.20px;top:417.64px;font-size:8.3px;line-height:8.3px;color:#262626;font-weight:400;transform:scaleX(0.8675);transform-origin:0 50%;">13999-00</div>
<div class="t" style="left:211.20px;top:417.64px;font-size:8.3px;line-height:8.3px;color:#262626;font-weight:400;transform:scaleX(0.8675);transform-origin:0 50%;">IA-SCRAP1-</div>
<div class="t" style="right:404.50px;top:417.64px;font-size:8.3px;line-height:8.3px;color:#262626;font-weight:400;text-align:right;transform:scaleX(0.8675);transform-origin:100% 50%;">-18,855.84</div>
<div class="t" style="left:403.20px;top:417.64px;font-size:8.3px;line-height:8.3px;color:#262626;font-weight:400;transform:scaleX(0.8675);transform-origin:0 50%;">Inventory Mod/Transfer Clearing</div>
<div class="t" style="left:516.20px;top:417.64px;font-size:8.3px;line-height:8.3px;color:#262626;font-weight:400;transform:scaleX(0.8675);transform-origin:0 50%;">TScrap</div>
<div class="t" style="left:629.20px;top:417.64px;font-size:8.3px;line-height:8.3px;color:#262626;font-weight:400;transform:scaleX(0.8675);transform-origin:0 50%;">Inventory Xfers &amp; Adjustments</div>
<div class="t" style="right:8.10px;top:417.64px;font-size:8.3px;line-height:8.3px;color:#262626;font-weight:400;text-align:right;transform:scaleX(0.8675);transform-origin:100% 50%;">0.00</div>
<div class="t" style="left:137.20px;top:433.25px;font-size:8.3px;line-height:8.3px;color:#262626;font-weight:400;transform:scaleX(0.8675);transform-origin:0 50%;">68880-00</div>
<div class="t" style="left:211.20px;top:433.25px;font-size:8.3px;line-height:8.3px;color:#262626;font-weight:400;transform:scaleX(0.8675);transform-origin:0 50%;">IA-SCRAP1-</div>
<div class="t" style="right:404.50px;top:433.25px;font-size:8.3px;line-height:8.3px;color:#262626;font-weight:400;text-align:right;transform:scaleX(0.8675);transform-origin:100% 50%;">18,855.84</div>
<div class="t" style="left:403.20px;top:433.25px;font-size:8.3px;line-height:8.3px;color:#262626;font-weight:400;transform:scaleX(0.8675);transform-origin:0 50%;">Vendor Scrap</div>
<div class="t" style="left:516.20px;top:433.25px;font-size:8.3px;line-height:8.3px;color:#262626;font-weight:400;transform:scaleX(0.8675);transform-origin:0 50%;">TScrap</div>
<div class="t" style="left:629.20px;top:433.25px;font-size:8.3px;line-height:8.3px;color:#262626;font-weight:400;transform:scaleX(0.8675);transform-origin:0 50%;">Inventory Xfers &amp; Adjustments</div>
<div class="t" style="right:8.10px;top:433.25px;font-size:8.3px;line-height:8.3px;color:#262626;font-weight:400;text-align:right;transform:scaleX(0.8675);transform-origin:100% 50%;">0.00</div>
<div class="b" style="left:135.00px;top:447.00px;width:71.00px;height:14.00px;background:#fff;border:1px solid #d6d6d6;box-sizing:border-box;"></div>
<svg style="left:196.50px;top:450px" width="8" height="8" viewBox="0 0 8 8"><circle cx="3.4" cy="3.4" r="2.6" fill="none" stroke="#b4b4b4" stroke-width="0.9"/><path d="M5.3 5.3l2.2 2.2" stroke="#b4b4b4" stroke-width="1.1"/></svg>
<div class="b" style="left:209.00px;top:447.00px;width:103.00px;height:14.00px;background:#fff;border:1px solid #d6d6d6;box-sizing:border-box;"></div>
<svg style="left:302.50px;top:450px" width="8" height="8" viewBox="0 0 8 8"><circle cx="3.4" cy="3.4" r="2.6" fill="none" stroke="#b4b4b4" stroke-width="0.9"/><path d="M5.3 5.3l2.2 2.2" stroke="#b4b4b4" stroke-width="1.1"/></svg>
<div class="b" style="left:315.00px;top:447.00px;width:83.00px;height:14.00px;background:#fff;border:1px solid #d6d6d6;box-sizing:border-box;"></div>
<svg style="left:388.50px;top:450px" width="8" height="8" viewBox="0 0 8 8"><circle cx="3.4" cy="3.4" r="2.6" fill="none" stroke="#b4b4b4" stroke-width="0.9"/><path d="M5.3 5.3l2.2 2.2" stroke="#b4b4b4" stroke-width="1.1"/></svg>
<div class="b" style="left:401.00px;top:447.00px;width:110.00px;height:14.00px;background:#fff;border:1px solid #d6d6d6;box-sizing:border-box;"></div>
<svg style="left:501.50px;top:450px" width="8" height="8" viewBox="0 0 8 8"><circle cx="3.4" cy="3.4" r="2.6" fill="none" stroke="#b4b4b4" stroke-width="0.9"/><path d="M5.3 5.3l2.2 2.2" stroke="#b4b4b4" stroke-width="1.1"/></svg>
<div class="b" style="left:514.00px;top:447.00px;width:54.00px;height:14.00px;background:#fff;border:1px solid #d6d6d6;box-sizing:border-box;"></div>
<svg style="left:558.50px;top:450px" width="8" height="8" viewBox="0 0 8 8"><circle cx="3.4" cy="3.4" r="2.6" fill="none" stroke="#b4b4b4" stroke-width="0.9"/><path d="M5.3 5.3l2.2 2.2" stroke="#b4b4b4" stroke-width="1.1"/></svg>
<div class="b" style="left:571.00px;top:447.00px;width:53.00px;height:14.00px;background:#fff;border:1px solid #d6d6d6;box-sizing:border-box;"></div>
<svg style="left:614.50px;top:450px" width="8" height="8" viewBox="0 0 8 8"><circle cx="3.4" cy="3.4" r="2.6" fill="none" stroke="#b4b4b4" stroke-width="0.9"/><path d="M5.3 5.3l2.2 2.2" stroke="#b4b4b4" stroke-width="1.1"/></svg>
<div class="b" style="left:627.00px;top:447.00px;width:102.00px;height:14.00px;background:#fff;border:1px solid #d6d6d6;box-sizing:border-box;"></div>
<svg style="left:719.50px;top:450px" width="8" height="8" viewBox="0 0 8 8"><circle cx="3.4" cy="3.4" r="2.6" fill="none" stroke="#b4b4b4" stroke-width="0.9"/><path d="M5.3 5.3l2.2 2.2" stroke="#b4b4b4" stroke-width="1.1"/></svg>
<div class="b" style="left:732.00px;top:447.00px;width:62.40px;height:14.00px;background:#fff;border:1px solid #d6d6d6;box-sizing:border-box;"></div>
<svg style="left:784.90px;top:450px" width="8" height="8" viewBox="0 0 8 8"><circle cx="3.4" cy="3.4" r="2.6" fill="none" stroke="#b4b4b4" stroke-width="0.9"/><path d="M5.3 5.3l2.2 2.2" stroke="#b4b4b4" stroke-width="1.1"/></svg>
</body></html>
